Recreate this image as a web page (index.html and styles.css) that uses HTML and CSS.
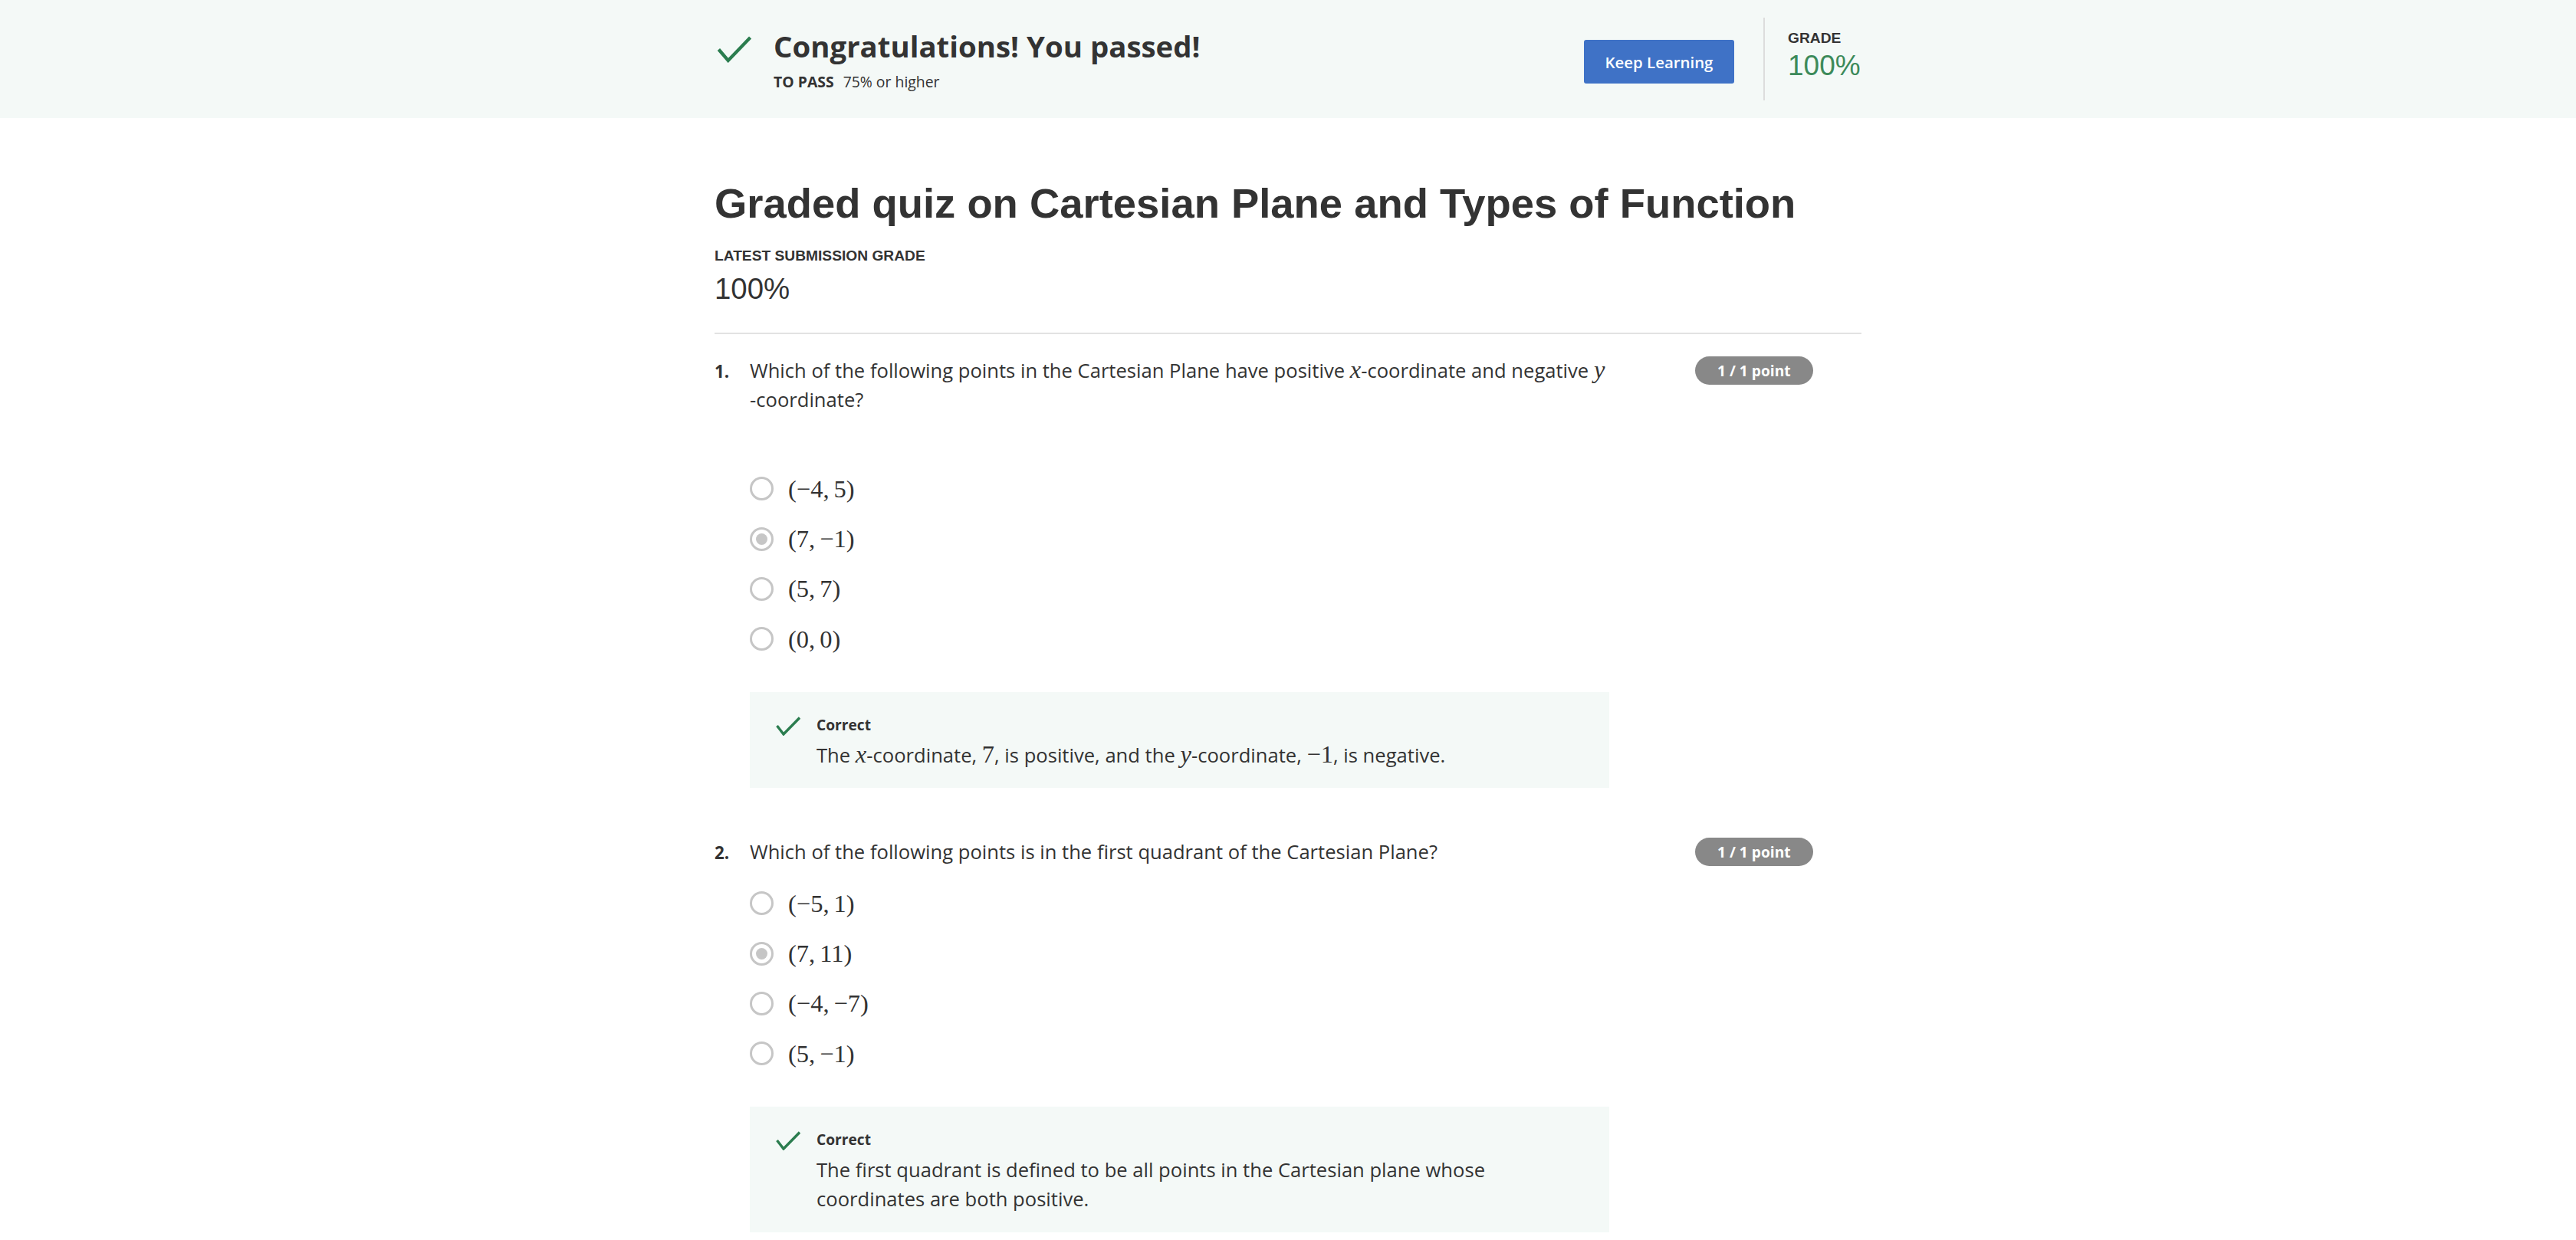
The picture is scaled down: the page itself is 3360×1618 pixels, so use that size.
FILE: index.html
```html
<!DOCTYPE html>
<html lang="en">
<head>
<meta charset="utf-8">
<title>Graded quiz on Cartesian Plane and Types of Function</title>
<link rel="stylesheet" href="styles.css">
</head>
<body>
<header class="banner">
  <div class="banner-inner">
    <div class="pass">
      <svg class="pass-check" viewBox="0 0 44 34" aria-hidden="true"><polyline points="2,17 14,31 42,2"/></svg>
      <div class="pass-text">
        <h2 class="pass-title">Congratulations! You passed!</h2>
        <div class="pass-sub"><span class="pass-label">TO PASS</span>75% or higher</div>
      </div>
    </div>
    <button class="keep" type="button">Keep Learning</button>
    <div class="vdivider"></div>
    <div class="grade">
      <div class="grade-label">GRADE</div>
      <div class="grade-value">100%</div>
    </div>
  </div>
</header>

<main class="page">
  <h1 class="quiz-title">Graded quiz on Cartesian Plane and Types of Function</h1>
  <div class="latest-label">LATEST SUBMISSION GRADE</div>
  <div class="latest-value">100%</div>
  <hr class="rule">

  <section class="question">
    <div class="q-num">1.</div>
    <div class="q-body">
      <p class="q-text">Which of the following points in the Cartesian Plane have positive <span class="m mi">x</span>-coordinate and negative <span class="m mi">y</span>-coordinate?</p>
      <p class="q-gap"></p>
      <ul class="options">
        <li class="option"><span class="radio"></span><span class="m">(−4,<span class="thin"></span>5)</span></li>
        <li class="option"><span class="radio checked"></span><span class="m">(7,<span class="thin"></span>−1)</span></li>
        <li class="option"><span class="radio"></span><span class="m">(5,<span class="thin"></span>7)</span></li>
        <li class="option"><span class="radio"></span><span class="m">(0,<span class="thin"></span>0)</span></li>
      </ul>
      <div class="feedback">
        <svg class="fb-check" viewBox="0 0 32 25" aria-hidden="true"><polyline points="1.5,12 10,23 31,1.5"/></svg>
        <div class="fb-content">
          <div class="fb-label">Correct</div>
          <p class="fb-text">The <span class="m mi">x</span>-coordinate, <span class="m">7</span>, is positive, and the <span class="m mi">y</span>-coordinate, <span class="m">−1</span>, is negative.</p>
        </div>
      </div>
    </div>
    <div class="q-points"><span class="badge">1 / 1 point</span></div>
  </section>

  <section class="question">
    <div class="q-num">2.</div>
    <div class="q-body">
      <p class="q-text">Which of the following points is in the first quadrant of the Cartesian Plane?</p>
      <ul class="options">
        <li class="option"><span class="radio"></span><span class="m">(−5,<span class="thin"></span>1)</span></li>
        <li class="option"><span class="radio checked"></span><span class="m">(7,<span class="thin"></span>11)</span></li>
        <li class="option"><span class="radio"></span><span class="m">(−4,<span class="thin"></span>−7)</span></li>
        <li class="option"><span class="radio"></span><span class="m">(5,<span class="thin"></span>−1)</span></li>
      </ul>
      <div class="feedback">
        <svg class="fb-check" viewBox="0 0 32 25" aria-hidden="true"><polyline points="1.5,12 10,23 31,1.5"/></svg>
        <div class="fb-content">
          <div class="fb-label">Correct</div>
          <p class="fb-text">The first quadrant is defined to be all points in the Cartesian plane whose coordinates are both positive.</p>
        </div>
      </div>
    </div>
    <div class="q-points"><span class="badge">1 / 1 point</span></div>
  </section>
</main>
</body>
</html>
```

FILE: styles.css
```css
* { box-sizing: border-box; }

html, body {
  margin: 0;
  padding: 0;
  background: #ffffff;
  color: #333333;
  font-family: "Open Sans", "Liberation Sans", sans-serif;
}

/* ---------- banner ---------- */
.banner {
  background: #f4f9f7;
  height: 154px;
}

.banner-inner {
  width: 1496px;
  height: 100%;
  margin: 0 auto;
  display: flex;
  align-items: center;
}

.pass {
  display: flex;
  align-items: flex-start;
  flex: 1;
}

.pass-check {
  width: 46px;
  height: 35px;
  margin-left: 3px;
  margin-top: 11px;
  flex: none;
}

.pass-check polyline,
.fb-check polyline {
  fill: none;
  stroke: #2b7d4f;
  stroke-width: 4.2;
  stroke-linecap: butt;
  stroke-linejoin: miter;
}

.pass-text {
  margin-left: 28px;
}

.pass-title {
  margin: 0;
  font-size: 38.4px;
  line-height: 48px;
  font-weight: 700;
  color: #333333;
}

.pass-sub {
  margin-top: 11px;
  font-size: 19.4px;
  line-height: 24px;
  color: #333333;
}

.pass-label {
  font-weight: 700;
  margin-right: 12px;
}

.keep {
  width: 196px;
  height: 57px;
  margin-top: 7px;
  border: 0;
  border-radius: 3px;
  background: #3f72c6;
  color: #ffffff;
  font-family: "Open Sans", sans-serif;
  font-weight: 600;
  font-size: 20.4px;
  padding: 0;
  flex: none;
}

.vdivider {
  width: 2px;
  height: 108px;
  background: #dddddd;
  margin-left: 38px;
  margin-right: 30px;
  flex: none;
}

.grade {
  width: 96px;
  margin-top: -8px;
  flex: none;
  font-family: "Liberation Sans", Arial, sans-serif;
}

.grade-label {
  font-weight: 700;
  font-size: 19.2px;
  line-height: 24px;
  color: #333333;
}

.grade-value {
  margin-top: 2px;
  font-size: 37px;
  line-height: 44px;
  color: #3c8a5a;
}

/* ---------- page ---------- */
.page {
  width: 1496px;
  margin: 0 auto;
  padding-bottom: 80px;
}

.quiz-title {
  margin: 79px 0 0;
  font-family: "Liberation Sans", Arial, sans-serif;
  font-weight: 700;
  font-size: 54.4px;
  line-height: 65px;
  color: #333333;
}

.latest-label {
  margin-top: 24px;
  font-family: "Liberation Sans", Arial, sans-serif;
  font-weight: 700;
  font-size: 19.2px;
  line-height: 24px;
}

.latest-value {
  margin-top: 7px;
  font-family: "Liberation Sans", Arial, sans-serif;
  font-size: 38.4px;
  line-height: 48px;
}

.rule {
  margin: 33px 0 0;
  height: 0;
  border: 0;
  border-top: 2px solid #e2e2e2;
}

/* ---------- questions ---------- */
.question {
  display: grid;
  grid-template-columns: 46px 1121px 1fr;
  align-items: start;
  padding: 29px 0 36px;
}

.q-num {
  padding-top: 1px;
  font-size: 22.4px;
  line-height: 38.4px;
  font-weight: 700;
}

.q-text {
  margin: 0;
  font-size: 25.6px;
  line-height: 38.4px;
}

.q-gap {
  margin: 0;
  height: 49px;
}

.m {
  font-family: "Liberation Serif", "Times New Roman", serif;
  font-size: 32.5px;
  line-height: 1;
  display: inline-block;
}

.mi {
  font-style: italic;
}

.thin {
  display: inline-block;
  width: 6px;
}

.options {
  list-style: none;
  margin: 27px 0 0;
  padding: 0;
  display: flex;
  flex-direction: column;
  gap: 25.4px;
}

.option {
  display: flex;
  align-items: center;
  height: 40px;
  gap: 19px;
}

.radio {
  width: 31px;
  height: 31px;
  border: 3.5px solid #c6c6c6;
  border-radius: 50%;
  display: flex;
  align-items: center;
  justify-content: center;
  flex: none;
}

.radio.checked::after {
  content: "";
  width: 15px;
  height: 15px;
  border-radius: 50%;
  background: #c6c6c6;
}

.feedback {
  margin-top: 49px;
  background: #f4f9f7;
  padding: 28.6px 32px 23px 34px;
  display: flex;
  align-items: flex-start;
  gap: 21px;
}

.fb-check {
  width: 32px;
  height: 25px;
  margin-top: 3px;
  flex: none;
}

.fb-check polyline {
  stroke-width: 3.4;
}

.fb-label {
  font-size: 19.2px;
  line-height: 28px;
  font-weight: 700;
}

.fb-text {
  margin: 7.4px 0 0;
  font-size: 25.6px;
  line-height: 38.4px;
}

.q-points {
  padding-left: 112px;
}

.badge {
  display: inline-block;
  height: 37px;
  line-height: 37px;
  padding: 0 29px;
  border-radius: 19px;
  background: #888888;
  color: #ffffff;
  font-size: 19.2px;
  font-weight: 700;
  white-space: nowrap;
}
```
